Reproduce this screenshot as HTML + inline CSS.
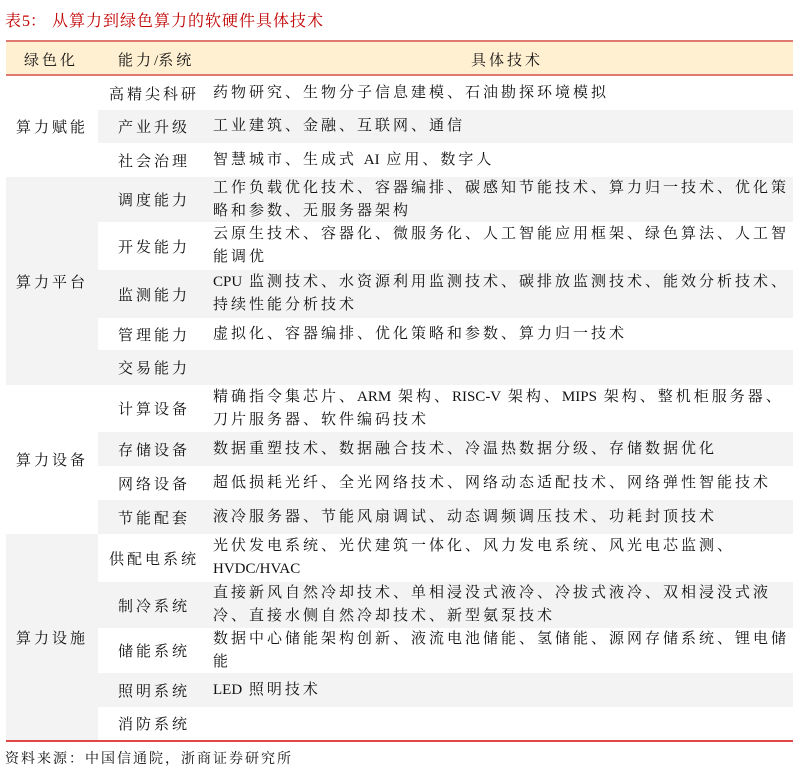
<!DOCTYPE html>
<html><head><meta charset="utf-8"><style>
body{margin:0;width:798px;height:781px;background:#fff;position:relative;overflow:hidden;font-family:"Liberation Serif","Noto Serif CJK SC",serif;color:#111;}
.t{position:absolute;left:5px;top:8px;font-size:16px;color:#c00000;letter-spacing:1px;font-family:"Liberation Serif","Noto Serif CJK SC",serif;}
.hd{position:absolute;left:6px;width:787px;top:40px;height:32px;background:#fff0d2;border-top:2px solid #e07a70;border-bottom:2px solid #e07a70;font-size:15px;letter-spacing:3px;}
.hd div{position:absolute;top:7px;}
.g{position:absolute;left:6px;width:92px;font-size:15px;letter-spacing:3px;display:flex;align-items:center;justify-content:center;}
.r{position:absolute;left:98px;width:695px;font-size:15px;letter-spacing:3px;}
.r .a{position:absolute;left:0;width:112px;top:0;bottom:0;display:flex;align-items:center;justify-content:center;}
.r .b{position:absolute;left:115px;right:4px;top:0;bottom:0;display:flex;align-items:center;line-height:23px;}
.gr{background:#f3f3f3;}
.l{letter-spacing:0;}
.bot{position:absolute;left:6px;width:787px;top:740px;height:0;border-top:2px solid #e04848;}
.src{position:absolute;left:5px;top:748px;font-size:14px;letter-spacing:2px;}
</style></head><body>
<div class="t">表<span class="l">5</span>：&nbsp;从算力到绿色算力的软硬件具体技术</div>
<div class="hd"><div style="left:18px">绿色化</div><div style="left:112px">能力<span class="l">/</span>系统</div><div style="left:465px">具体技术</div></div>

<div class="g" style="top:76px;height:101px">算力赋能</div>
<div class="g gr" style="top:177px;height:208px">算力平台</div>
<div class="g" style="top:385px;height:149px">算力设备</div>
<div class="g gr" style="top:534px;height:206px">算力设施</div>

<div class="r" style="top:76px;height:34px"><div class="a">高精尖科研</div><div class="b">药物研究、生物分子信息建模、石油勘探环境模拟</div></div>
<div class="r gr" style="top:110px;height:33px"><div class="a">产业升级</div><div class="b">工业建筑、金融、互联网、通信</div></div>
<div class="r" style="top:143px;height:34px"><div class="a">社会治理</div><div class="b"><span>智慧城市、生成式 <span class="l">AI</span> 应用、数字人</span></div></div>
<div class="r gr" style="top:177px;height:45px"><div class="a">调度能力</div><div class="b">工作负载优化技术、容器编排、碳感知节能技术、算力归一技术、优化策略和参数、无服务器架构</div></div>
<div class="r" style="top:222px;height:48px"><div class="a">开发能力</div><div class="b">云原生技术、容器化、微服务化、人工智能应用框架、绿色算法、人工智能调优</div></div>
<div class="r gr" style="top:270px;height:48px"><div class="a">监测能力</div><div class="b"><span><span class="l">CPU</span> 监测技术、水资源利用监测技术、碳排放监测技术、能效分析技术、持续性能分析技术</span></div></div>
<div class="r" style="top:318px;height:32px"><div class="a">管理能力</div><div class="b">虚拟化、容器编排、优化策略和参数、算力归一技术</div></div>
<div class="r gr" style="top:350px;height:35px"><div class="a">交易能力</div><div class="b"></div></div>
<div class="r" style="top:385px;height:47px"><div class="a">计算设备</div><div class="b"><span>精确指令集芯片、<span class="l">ARM</span> 架构、<span class="l">RISC-V</span> 架构、<span class="l">MIPS</span> 架构、整机柜服务器、刀片服务器、软件编码技术</span></div></div>
<div class="r gr" style="top:432px;height:34px"><div class="a">存储设备</div><div class="b">数据重塑技术、数据融合技术、冷温热数据分级、存储数据优化</div></div>
<div class="r" style="top:466px;height:34px"><div class="a">网络设备</div><div class="b">超低损耗光纤、全光网络技术、网络动态适配技术、网络弹性智能技术</div></div>
<div class="r gr" style="top:500px;height:34px"><div class="a">节能配套</div><div class="b">液冷服务器、节能风扇调试、动态调频调压技术、功耗封顶技术</div></div>
<div class="r" style="top:534px;height:48px"><div class="a">供配电系统</div><div class="b"><span>光伏发电系统、光伏建筑一体化、风力发电系统、风光电芯监测、<br><span class="l">HVDC/HVAC</span></span></div></div>
<div class="r gr" style="top:582px;height:46px"><div class="a">制冷系统</div><div class="b">直接新风自然冷却技术、单相浸没式液冷、冷拔式液冷、双相浸没式液冷、直接水侧自然冷却技术、新型氨泵技术</div></div>
<div class="r" style="top:628px;height:45px"><div class="a">储能系统</div><div class="b">数据中心储能架构创新、液流电池储能、氢储能、源网存储系统、锂电储能</div></div>
<div class="r gr" style="top:673px;height:34px"><div class="a">照明系统</div><div class="b"><span><span class="l">LED</span> 照明技术</span></div></div>
<div class="r" style="top:707px;height:33px"><div class="a">消防系统</div><div class="b"></div></div>
<div class="bot"></div>
<div class="src">资料来源：中国信通院，浙商证券研究所</div>
</body></html>
